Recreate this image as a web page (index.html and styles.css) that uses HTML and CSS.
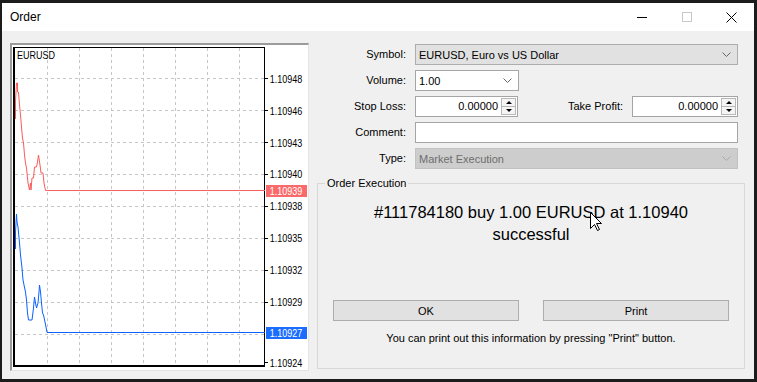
FILE: index.html
```html
<!DOCTYPE html>
<html lang="en">
<head>
    <meta charset="UTF-8">
    <title>Order</title>
    <link rel="stylesheet" href="styles.css">
</head>
<body>
<div class="window">
    <div class="titlebar">
        <span class="title">Order</span>
        <div class="caption-buttons">
            <span class="cap-btn"><svg width="10" height="10"><line x1="0" y1="5.5" x2="10" y2="5.5" stroke="#000"/></svg></span>
            <span class="cap-btn"><svg width="10" height="10"><rect x="0.5" y="0.5" width="9" height="9" fill="none" stroke="#c8c8c8"/></svg></span>
            <span class="cap-btn"><svg width="11" height="11"><path d="M0.5 0.5 L10.5 10.5 M10.5 0.5 L0.5 10.5" stroke="#000" fill="none"/></svg></span>
        </div>
    </div>

    <div class="content">
        <div class="chart-panel">
            <svg class="chart" width="296" height="325" viewBox="12 45 296 325">
                <g stroke="#c6c6c6" stroke-dasharray="3 3" shape-rendering="crispEdges">
                    <line x1="47.5" y1="48" x2="47.5" y2="365"/>
                    <line x1="79.5" y1="48" x2="79.5" y2="365"/>
                    <line x1="111.5" y1="48" x2="111.5" y2="365"/>
                    <line x1="143.5" y1="48" x2="143.5" y2="365"/>
                    <line x1="175.5" y1="48" x2="175.5" y2="365"/>
                    <line x1="207.5" y1="48" x2="207.5" y2="365"/>
                    <line x1="239.5" y1="48" x2="239.5" y2="365"/>
                    <line x1="15" y1="78.5" x2="264" y2="78.5"/>
                    <line x1="15" y1="110.5" x2="264" y2="110.5"/>
                    <line x1="15" y1="142.5" x2="264" y2="142.5"/>
                    <line x1="15" y1="174.5" x2="264" y2="174.5"/>
                    <line x1="15" y1="206.5" x2="264" y2="206.5"/>
                    <line x1="15" y1="238.5" x2="264" y2="238.5"/>
                    <line x1="15" y1="270.5" x2="264" y2="270.5"/>
                    <line x1="15" y1="302.5" x2="264" y2="302.5"/>
                    <line x1="15" y1="334.5" x2="264" y2="334.5"/>
                </g>
                <g stroke="#000" shape-rendering="crispEdges">
                    <line x1="13" y1="47.5" x2="265" y2="47.5"/>
                    <line x1="264.5" y1="47" x2="264.5" y2="367"/>
                    <line x1="14" y1="47" x2="14" y2="367" stroke-width="2"/>
                    <line x1="13" y1="366" x2="265" y2="366" stroke-width="2"/>
                    <line x1="265" y1="78.5" x2="268" y2="78.5"/>
                    <line x1="265" y1="110.5" x2="268" y2="110.5"/>
                    <line x1="265" y1="142.5" x2="268" y2="142.5"/>
                    <line x1="265" y1="174.5" x2="268" y2="174.5"/>
                    <line x1="265" y1="206.5" x2="268" y2="206.5"/>
                    <line x1="265" y1="238.5" x2="268" y2="238.5"/>
                    <line x1="265" y1="270.5" x2="268" y2="270.5"/>
                    <line x1="265" y1="302.5" x2="268" y2="302.5"/>
                    <line x1="265" y1="362.5" x2="268" y2="362.5"/>
                </g>
                <polyline fill="none" stroke="#f85c5c" points="15.5,119 15.5,101 16.5,83 17.5,83 17.5,92 18.5,92 19.5,105 20.5,115 21.5,127 22.5,138 23.5,143 24.5,155 25.5,163 26.5,168 28,183 29.5,190 30.5,183 31,190 32,178 33.5,178 34.5,167 36.5,167 37.5,162 38.5,155 40,165 41,173 43,173 44,183 45.5,190.5 265,190.5"/>
                <polyline fill="none" stroke="#0a62ff" points="15.5,249 15.5,232 16.5,214 17,222 18,227 19.5,243 20.5,255 22,268 23,280 24,285 25.5,292 26.5,300 27.5,313 28.5,320 32,320 33.5,308 34.5,297 35.5,303 36.5,308 38,303 39,292 39.5,285 40.5,292 41.5,303 42.5,313 43.5,315 45,322 46,327 47,332.5 265,332.5"/>
                <rect x="266" y="185" width="41" height="12" fill="#fa6a6a"/>
                <rect x="266" y="327" width="41" height="12" fill="#1a6dff"/>
                <g class="price" transform="scale(0.82 1)">
                    <text x="20.7" y="59">EURUSD</text>
                    <text x="329" y="83">1.10948</text>
                    <text x="329" y="115">1.10946</text>
                    <text x="329" y="147">1.10943</text>
                    <text x="329" y="178.5">1.10940</text>
                    <text x="329" y="210.5">1.10938</text>
                    <text x="329" y="242.5">1.10935</text>
                    <text x="329" y="274.5">1.10932</text>
                    <text x="329" y="306.5">1.10929</text>
                    <text x="329" y="367">1.10924</text>
                    <text x="329" y="195" fill="#fff">1.10939</text>
                    <text x="329" y="337" fill="#fff">1.10927</text>
                </g>
            </svg>
        </div>

        <div class="order-side">
            <div class="form-grid">
                <span class="lbl">Symbol:</span>
                <div class="combo gray">
                    <span>EURUSD, Euro vs US Dollar</span>
                    <svg width="9" height="5"><polyline points="0.5,0.5 4.5,4.5 8.5,0.5" fill="none" stroke="#666"/></svg>
                </div>

                <span class="lbl">Volume:</span>
                <div class="combo white volume">
                    <span>1.00</span>
                    <svg width="9" height="5"><polyline points="0.5,0.5 4.5,4.5 8.5,0.5" fill="none" stroke="#666"/></svg>
                </div>

                <span class="lbl">Stop Loss:</span>
                <div class="sl-row">
                    <div class="spin sl">
                        <span class="val">0.00000</span>
                        <span class="arrows"><span class="up"></span><span class="down"></span></span>
                    </div>
                    <span class="lbl tp-lbl">Take Profit:</span>
                    <div class="spin tp">
                        <span class="val">0.00000</span>
                        <span class="arrows"><span class="up"></span><span class="down"></span></span>
                    </div>
                </div>

                <span class="lbl">Comment:</span>
                <div class="text-input"></div>

                <span class="lbl">Type:</span>
                <div class="combo disabled">
                    <span>Market Execution</span>
                    <svg width="9" height="5"><polyline points="0.5,0.5 4.5,4.5 8.5,0.5" fill="none" stroke="#a8a8a8"/></svg>
                </div>
            </div>

            <fieldset class="exec">
                <legend>Order Execution</legend>
                <div class="message">#111784180 buy 1.00 EURUSD at 1.10940<br>successful</div>
                <div class="buttons">
                    <button class="btn">OK</button>
                    <button class="btn">Print</button>
                </div>
                <div class="hint">You can print out this information by pressing "Print" button.</div>
            </fieldset>
        </div>
    </div>

    <svg class="cursor" width="13" height="20"><path d="M0.5 0.5 L0.5 16.5 L4.5 12.5 L7.5 18.5 L9.5 17.5 L6.5 11.5 L11.5 11.5 Z" fill="#fff" stroke="#000"/></svg>
</div>
</body>
</html>
```

FILE: styles.css
```css
* {
    box-sizing: border-box;
}
body {
    margin: 0;
    width: 757px;
    height: 382px;
    overflow: hidden;
    background-color: #1c1c1c;
    font-family: "Liberation Sans", Arial, sans-serif;
    font-size: 11px;
    color: #000;
}
.window {
    position: relative;
    margin: 3px 0 0 2px;
    width: 752px;
    height: 376px;
    background-color: #f0f0f0;
}
.titlebar {
    height: 28px;
    background-color: #fff;
    display: flex;
    align-items: center;
}
.title {
    flex: 1;
    padding-left: 8px;
    font-size: 12px;
}
.caption-buttons {
    display: flex;
    height: 100%;
}
.cap-btn {
    width: 45px;
    display: flex;
    align-items: center;
    justify-content: center;
}
.cap-btn svg {
    display: block;
}
.content {
    display: flex;
    padding: 12px 0 0 8px;
}
.chart-panel {
    width: 299px;
    height: 328px;
    background-color: #fff;
    border-style: solid;
    border-width: 2px 1px 1px 2px;
    border-color: #9b9b9b #e4e4e4 #e4e4e4 #9b9b9b;
}
.chart {
    display: block;
}
.chart text {
    font-family: "Liberation Sans", Arial, sans-serif;
    font-size: 11px;
}
.order-side {
    width: 428px;
    margin-left: 8px;
    padding-top: 1px;
}
.form-grid {
    display: grid;
    grid-template-columns: 89px 323px;
    grid-auto-rows: 21px;
    column-gap: 9px;
    row-gap: 5px;
}
.lbl {
    text-align: right;
    line-height: 21px;
}
.combo {
    display: flex;
    align-items: center;
    justify-content: space-between;
    padding: 0 6px 0 3px;
    border: 1px solid #adadad;
}
.combo svg {
    display: block;
}
.combo.gray {
    background-color: #e1e1e1;
}
.combo.white {
    background-color: #fff;
    border-color: #a5a5a5;
}
.combo.volume {
    width: 104px;
}
.combo.disabled {
    background-color: #cdcdcd;
    border-color: #c2c2c2;
    color: #6d6d6d;
}
.sl-row {
    display: flex;
}
.tp-lbl {
    flex: 1;
    padding-right: 9px;
}
.spin {
    display: flex;
    padding: 1px;
    background-color: #fff;
    border: 1px solid #a5a5a5;
}
.spin.sl {
    width: 103px;
}
.spin.tp {
    width: 106px;
}
.spin .val {
    flex: 1;
    text-align: right;
    padding-right: 3px;
    line-height: 17px;
}
.arrows {
    width: 15px;
    display: flex;
    flex-direction: column;
    border: 1px solid #b8b8b8;
    background-color: #f5f5f5;
}
.arrows span {
    flex: 1;
    display: flex;
    align-items: center;
    justify-content: center;
}
.arrows .up {
    border-bottom: 1px solid #b8b8b8;
}
.arrows .up::after {
    content: "";
    border-left: 3px solid transparent;
    border-right: 3px solid transparent;
    border-bottom: 3px solid #000;
}
.arrows .down::after {
    content: "";
    border-left: 3px solid transparent;
    border-right: 3px solid transparent;
    border-top: 3px solid #000;
}
.text-input {
    background-color: #fff;
    border: 1px solid #a5a5a5;
}
.exec {
    margin: 8px 0 0;
    padding: 0 7px 23px;
    border: 1px solid #d8d8d8;
    min-inline-size: 0;
}
.exec legend {
    padding: 0 2px;
    line-height: 13px;
}
.message {
    margin-top: 11px;
    text-align: center;
    font-size: 16.5px;
    line-height: 22px;
}
.buttons {
    display: flex;
    justify-content: center;
    gap: 24px;
    margin-top: 55px;
}
.btn {
    width: 186px;
    height: 21px;
    padding: 0;
    background-color: #e1e1e1;
    border: 1px solid #adadad;
    font-family: inherit;
    font-size: 11px;
    color: #000;
}
.hint {
    margin-top: 11px;
    text-align: center;
    line-height: 13px;
}
.cursor {
    position: absolute;
    left: 588px;
    top: 209px;
}
```
